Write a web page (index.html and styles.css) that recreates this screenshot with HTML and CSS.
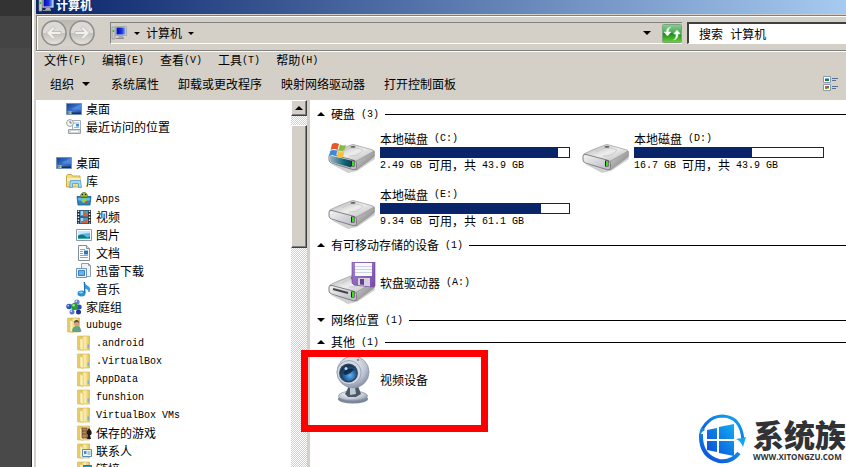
FILE: index.html
```html
<!DOCTYPE html>
<html lang="zh-CN">
<head>
<meta charset="utf-8">
<title>计算机</title>
<link rel="stylesheet" href="styles.css">
</head>
<body>
<svg class="defs" aria-hidden="true">
  <defs>
    <linearGradient id="gScreen" x1="0" y1="0" x2="1" y2="1"><stop offset="0" stop-color="#173a94"/><stop offset=".55" stop-color="#3d78cf"/><stop offset="1" stop-color="#1c4ba8"/></linearGradient>
    <linearGradient id="gBlue" x1="0" y1="0" x2="1" y2="0"><stop offset="0" stop-color="#0407b8"/><stop offset=".6" stop-color="#1c35e0"/><stop offset="1" stop-color="#7db1f5"/></linearGradient>
    <linearGradient id="gFolder" x1="0" y1="0" x2="1" y2="0"><stop offset="0" stop-color="#e8c75a"/><stop offset=".45" stop-color="#fbeeae"/><stop offset="1" stop-color="#e3c050"/></linearGradient>
    <linearGradient id="gTop" x1="0" y1="0" x2="1" y2="1"><stop offset="0" stop-color="#a9a9a9"/><stop offset=".5" stop-color="#ededed"/><stop offset="1" stop-color="#b0b0b0"/></linearGradient>
    <linearGradient id="gFront" x1="0" y1="0" x2="1" y2="1"><stop offset="0" stop-color="#f4f4f6"/><stop offset="1" stop-color="#b6b6c2"/></linearGradient>
    <linearGradient id="gSide" x1="0" y1="0" x2="1" y2="1"><stop offset="0" stop-color="#d5d5d5"/><stop offset="1" stop-color="#777"/></linearGradient>
    <linearGradient id="gTeal" x1="0" y1="0" x2="1" y2="0"><stop offset="0" stop-color="#9bb3c0"/><stop offset=".7" stop-color="#0d6378"/><stop offset="1" stop-color="#164653"/></linearGradient>
    <linearGradient id="gGreen" x1="0" y1="0" x2="0" y2="1"><stop offset="0" stop-color="#8ccf94"/><stop offset=".48" stop-color="#45a552"/><stop offset=".5" stop-color="#168a1e"/><stop offset="1" stop-color="#6bd332"/></linearGradient>
    <linearGradient id="gNav" x1="0" y1="0" x2="0" y2="1"><stop offset="0" stop-color="#d9d8d5"/><stop offset=".48" stop-color="#dddcd9"/><stop offset=".52" stop-color="#c5c2bc"/><stop offset="1" stop-color="#e6e4df"/></linearGradient>
    <linearGradient id="gFloppy" x1="0" y1="0" x2="1" y2="1"><stop offset="0" stop-color="#a183cd"/><stop offset="1" stop-color="#7a4ba9"/></linearGradient>
    <linearGradient id="gLogo" x1="0" y1="1" x2="1" y2="0"><stop offset="0" stop-color="#0b47d8"/><stop offset="1" stop-color="#12aef2"/></linearGradient>
    <radialGradient id="gCam" cx=".4" cy=".3" r=".75"><stop offset="0" stop-color="#f6f8fb"/><stop offset=".65" stop-color="#bfc6d3"/><stop offset="1" stop-color="#7f8ba1"/></radialGradient>
    <radialGradient id="gLens" cx=".6" cy=".65" r=".6"><stop offset="0" stop-color="#62b5f0"/><stop offset=".6" stop-color="#2164a8"/><stop offset="1" stop-color="#16324f"/></radialGradient>

    <symbol id="i-computer" viewBox="0 0 16 16">
      <path d="M1 2h3v12H1z" fill="#c9c9c5" stroke="#8b8b86" stroke-width=".6"/><path d="M1.700 5h1.500v2H1.700z" fill="#19c918"/>
      <path d="M4.500 1.500h11v9h-11z" fill="#dcdcd8" stroke="#9a9a95" stroke-width=".7"/><path d="M5.500 2.500h9v7h-9z" fill="url(#gBlue)"/>
      <path d="M8 11h4l1 2H7z" fill="#aaa"/><path d="M5 13.500h8" stroke="#8c8c88"/>
    </symbol>
    <symbol id="i-desktop" viewBox="0 0 16 16">
      <path d="M.5 2.500h15v11H.5z" fill="url(#gScreen)" stroke="#7593b9"/><path d="M1 11.500h14v1.500H1z" fill="#17324e"/>
      <path d="M5 8l10-5v6z" fill="#6ba2e8" opacity=".45"/>
      <path d="M1.500 10h2v1.500h-2z" fill="#f07b30"/><path d="M3.500 10h2v1.500h-2z" fill="#8dd04b"/><path d="M1.500 11.500h2V13h-2z" fill="#58b2f2"/><path d="M3.500 11.500h2V13h-2z" fill="#f7d745"/>
    </symbol>
    <symbol id="i-recent" viewBox="0 0 16 16">
      <path d="M6.500 1.500h8v10h-8z" fill="#f7fafc" stroke="#a5aeb6"/><path d="M8 4h5M8 8.500h5" stroke="#9cb8d0"/><path d="M10 5h3v2.500h-3z" fill="#3e8fd4"/>
      <path d="M2.500 10.500h12v4h-12z" fill="#d4d8da" stroke="#999fa4"/><path d="M5 12.500h7" stroke="#fff"/>
      <circle cx="4" cy="4" r="3.400" fill="#f5f5f2" stroke="#9da1a4"/><path d="M4 2v2h1.800" fill="none" stroke="#555" stroke-width=".8"/>
    </symbol>
    <symbol id="i-library" viewBox="0 0 16 16">
      <path d="M.5 2.500l1-1h4l1 1.500h7.500v11H.5z" fill="#f2d97c" stroke="#cba945"/><path d="M1 5h13v3H1z" fill="#fbefb8"/>
      <path d="M4.500 7.500h10l1 7h-3v-4h-6v4h-3z" fill="#9fd9f5" stroke="#519dcd" stroke-width=".8"/>
    </symbol>
    <symbol id="i-apps" viewBox="0 0 16 16">
      <path d="M4.500 6q0-4.500 3.500-4.500T11.500 6z" fill="#9fc02d" stroke="#4f6d15" stroke-width=".7"/><circle cx="6.500" cy="3.500" r=".7" fill="#222"/><circle cx="9.500" cy="3.500" r=".7" fill="#222"/>
      <path d="M1 5.500h3l1 1h6l1-1h3l-1 8.500H2z" fill="#2b86c8" stroke="#125a96" stroke-width=".8"/><path d="M2 7h12l-.3 2.500H2.300z" fill="#65b9e8"/><path d="M5 10l4-3 2 3-3 2z" fill="#9fd43b"/><path d="M8 11l3-1v2z" fill="#e1422a"/>
    </symbol>
    <symbol id="i-video" viewBox="0 0 16 16">
      <path d="M1 1h14v14H1z" fill="#222c36"/><path d="M4 1.500h8v6H4zM4 8.500h8v6H4z" fill="#3fa0dc"/><path d="M7 2l5 3v2.500H8zM4 11l4 1 3-2v4H6z" fill="#d0623c"/><path d="M5 2h2v4H5zM5 9h2v3H5z" fill="#9fd8f3"/>
      <path d="M2.500 1.500v13M13.500 1.500v13" stroke="#e8eef2" stroke-width="1.500" stroke-dasharray="1.500 1.500"/>
    </symbol>
    <symbol id="i-picture" viewBox="0 0 16 16">
      <path d="M.5 2.500h15v11H.5z" fill="#fff" stroke="#8f989f"/><path d="M2 4h12v8H2z" fill="#56b6e8"/><path d="M2 4h12v2q-6 0-12 2z" fill="#c4e9f8"/><path d="M2 9q4-3 7 0t5 0v3H2z" fill="#1d6f76"/><path d="M2 11h12v1H2z" fill="#3cb0b7"/>
    </symbol>
    <symbol id="i-doc" viewBox="0 0 16 16">
      <path d="M2.500 .5h8l3 3v12h-11z" fill="#fbfcfd" stroke="#858c93"/><path d="M10.500 .5v3h3" fill="#dde3e8" stroke="#858c93"/><path d="M4 4.500h5M4 6.500h3M4 8.500h3M4 10.500h8M4 12.500h8" stroke="#8ba6c8"/><path d="M8 5.500h4v4H8z" fill="#2878bd"/>
    </symbol>
    <symbol id="i-download" viewBox="0 0 16 16">
      <path d="M5.500 .5h7l2 2v11h-9z" fill="#eef3f8" stroke="#8ba0b5"/><path d="M12.500 .5v2h2" fill="none" stroke="#8ba0b5"/><path d="M.5 5.500h10v9H.5z" fill="#e9f3fc" stroke="#7593b0"/><path d="M2.500 7.500h6v5h-6z" fill="#6bb0ef" stroke="#357fc8"/>
    </symbol>
    <symbol id="i-music" viewBox="0 0 16 16">
      <path d="M8 1q1 3 4 4.500t1 5.500q0-3-4-4v5z" fill="#2d9de2" stroke="#1b74b8" stroke-width=".6"/><ellipse cx="5.500" cy="12.500" rx="4" ry="3" fill="#2590db"/><ellipse cx="5" cy="11.500" rx="2" ry="1" fill="#8bd1f5"/><path d="M8.500 1v11" stroke="#1b74b8"/>
    </symbol>
    <symbol id="i-homegroup" viewBox="0 0 16 16">
      <path d="M3 7l5 1 3-5M8 8l5 4M8 8l-2 5" stroke="#8392ba" stroke-width="2"/>
      <circle cx="3" cy="7.500" r="2.700" fill="#2f54b8"/><circle cx="11" cy="3" r="2.600" fill="#6482c8"/><circle cx="13.200" cy="8" r="2.500" fill="#304fa8"/><circle cx="6" cy="13" r="2.500" fill="#5478ce"/><circle cx="12.500" cy="13" r="2.500" fill="#20358e"/><circle cx="8.500" cy="7.500" r="3.500" fill="#279d34"/>
      <circle cx="7.600" cy="6.300" r="1.300" fill="#a0e58f"/><circle cx="2.300" cy="6.700" r=".9" fill="#b7caf1"/><circle cx="10.300" cy="2.200" r=".9" fill="#dce6fa"/><circle cx="5.300" cy="12.200" r=".9" fill="#d0dffa"/>
    </symbol>
    <symbol id="i-folder" viewBox="0 0 16 16">
      <path d="M1.500 1h5v14h-5z" fill="#e9cb67" stroke="#d7b74f" stroke-width=".6"/><path d="M5 2.500l2-1.500h6.500v14H5z" fill="url(#gFolder)" stroke="#d0ad45" stroke-width=".6"/><path d="M4 3l3 1.500v11L4 14z" fill="#fdf3bd" stroke="#d9bd5d" stroke-width=".5"/><path d="M11.500 9.500H13V13h-1.500z" fill="#6db6e3"/>
    </symbol>
    <symbol id="i-user" viewBox="0 0 16 16">
      <use href="#i-folder"/><circle cx="10.500" cy="6.500" r="2.600" fill="#d8a075"/><path d="M8 6q0-3 2.500-3T13 6q-2-2-5 0z" fill="#51483f"/><path d="M6.500 14.500q0-5 4-5t4.500 5z" fill="#5fa486" stroke="#41816a" stroke-width=".5"/>
    </symbol>
    <symbol id="i-games" viewBox="0 0 16 16">
      <use href="#i-folder"/><path d="M6 3h5v10H6z" fill="#b98553" stroke="#593b28" stroke-width=".7"/><path d="M6.500 6h4M6.500 9h4" stroke="#2c2119" stroke-dasharray="1 1"/><path d="M13 3q4 4 2 7h-1l1 4h-4l1-4q-3-2 1-7z" fill="#1c1c1c"/>
    </symbol>
    <symbol id="i-contacts" viewBox="0 0 16 16">
      <use href="#i-folder"/><path d="M6.500 6.500h9v7h-9z" fill="#eaf5fc" stroke="#5b8cae"/><path d="M8 8h2.500v3H8z" fill="#4291c6"/><path d="M11.500 9h3M11.500 11h3" stroke="#7799b0"/>
    </symbol>
    <symbol id="i-links" viewBox="0 0 16 16">
      <use href="#i-folder"/><path d="M7.500 4.500h8v9h-8z" fill="#2a95dc" stroke="#1b73b4"/><path d="M9 11l4-4M10 7h3v3" fill="none" stroke="#fff" stroke-width="1.300"/>
    </symbol>

    <symbol id="i-drive" viewBox="0 0 48 32">
      <path d="M3 22l17 9 9-2 18-12-2-5-20 13z" fill="#777" opacity=".35"/>
      <path d="M1.500 12.500Q2 11 23 3q2-1 4 0l18 5q2 1 1 3L29 19q-2 1-4 1L3 14z" fill="url(#gTop)" stroke="#9a9a9a" stroke-width=".7"/>
      <path d="M28 19.500L46 9q1 1 .5 5.500L29 27.500q-1.500 1-1.500-2z" fill="url(#gSide)" stroke="#888" stroke-width=".5"/>
      <path d="M1 14q0-2 3-1.500l21 5.500q3.500 1 3.500 3.500v4q0 3-3 2.300L3.500 21Q1 20 1 18z" fill="url(#gFront)" stroke="#777" stroke-width=".9"/>
      <ellipse cx="25" cy="5" rx="2.500" ry="1.100" fill="#55585c"/><path d="M14 10q10-7 21-2-5 7-14 6" fill="none" stroke="#c2c2c2" stroke-width=".7"/>
      <path d="M23 18.500h3.500v6H23z" fill="#222"/><path d="M24 19h2v5h-2z" fill="#36e318"/>
    </symbol>
    <symbol id="i-windrive" viewBox="0 0 48 32">
      <use href="#i-drive"/><path d="M2 13.500l21 5v7L3 20q-1-1-1-3z" fill="url(#gTeal)"/>
      <path d="M4 2q3-2 7 0L9.500 8Q6 6 2.500 8z" fill="#e4592a"/><path d="M12 2.500q4 2 6 0L16.500 8q-3 2-6 0z" fill="#86bd3c"/><path d="M2.200 9q3-2 7 0L8 14q-3-2-7 0z" fill="#4188d2"/><path d="M10.200 9.500q3 2 6 0L15 15q-3 1.500-6 0z" fill="#f9c22e"/>
    </symbol>
    <symbol id="i-floppy" viewBox="0 0 48 42">
      <use href="#i-drive" x="0" y="11" width="48" height="32"/>
      <path d="M5 27l15 4" stroke="#444" stroke-width="2"/><path d="M24 0h23v24l-3 1-18-2-2-2z" fill="url(#gFloppy)" stroke="#6d3d98" stroke-width=".6"/>
      <path d="M27 1h17v13H27z" fill="#f8f9fc"/><path d="M27 4.500h17M27 7.500h17M27 10.500h17" stroke="#bfc8db" stroke-width=".8"/><path d="M30 16h12v8.500l-12-1.500z" fill="#d4d2de"/><path d="M32 17h4v6l-4-.5z" fill="#674095"/>
    </symbol>
    <symbol id="i-webcam" viewBox="0 0 36 50">
      <ellipse cx="18" cy="44" rx="15" ry="4.500" fill="#7b8696"/><ellipse cx="18" cy="41" rx="14.500" ry="5" fill="url(#gCam)" stroke="#8792a5" stroke-width=".7"/>
      <path d="M14 31h9l3 8-5 3h-8l-3-3z" fill="#4d5866"/><path d="M15 32h5l1 7-6 1z" fill="#bfc8d5"/>
      <circle cx="18" cy="17" r="16" fill="url(#gCam)" stroke="#8b97aa" stroke-width=".8"/><ellipse cx="14" cy="17.500" rx="12" ry="12" fill="#d4dae4" stroke="#8d99ab" stroke-width=".8"/>
      <circle cx="13.500" cy="18" r="9.500" fill="#33465d"/><circle cx="13.500" cy="18" r="8" fill="url(#gLens)"/><path d="M8 18q4-6 11-4-3 5-9 6z" fill="#101b2d" opacity=".8"/><circle cx="11" cy="13.500" r="1.500" fill="#bfdaf0"/><circle cx="23" cy="5" r="1" fill="#778"/>
    </symbol>
  </defs>
</svg>

<div class="backdrop" aria-hidden="true"></div>
<main class="window">
  <header class="titlebar"><svg class="icon"><use href="#i-computer"/></svg><h1>计算机</h1></header>

  <div class="navbar">
    <div class="travel">
      <button aria-label="后退"><svg viewBox="0 0 26 26"><circle cx="13" cy="13" r="12" fill="url(#gNav)" stroke="#8c8e8e" stroke-width="1.500"/><path d="M5.500 13l6.500-6.500 2 2-3 3h9v3h-9l3 3-2 2z" fill="#f1f0ed" stroke="#b7b5b0" stroke-width=".8"/></svg></button>
      <button aria-label="前进"><svg viewBox="0 0 26 26"><circle cx="13" cy="13" r="12" fill="url(#gNav)" stroke="#8c8e8e" stroke-width="1.500"/><path d="M20.500 13L14 6.500l-2 2 3 3H6v3h9l-3 3 2 2z" fill="#f1f0ed" stroke="#b7b5b0" stroke-width=".8"/></svg></button>
    </div>
    <div class="address">
      <svg class="icon"><use href="#i-computer"/></svg>
      <button class="crumb-arrow" aria-label="位置"><i class="down small"></i></button>
      <button class="crumb">计算机<i class="down small"></i></button>
      <button class="history" aria-label="历史记录"><i class="down"></i></button>
      <button class="refresh" aria-label="刷新"><svg viewBox="0 0 20 19"><rect x=".5" y=".5" width="19" height="18" rx="1" fill="url(#gGreen)" stroke="#7aa67d"/><path d="M9 3Q6 4 6.500 8H9l-3.500 4L2 8h2.500Q4 4 9 3zM11.500 16q3-1 2.500-6h-2.500L15 6l3.500 4H16q.5 5-4.500 6z" fill="#fff" stroke="#e2f3e2" stroke-width=".5"/></svg></button>
    </div>
    <input class="search" type="text" aria-label="搜索" value="搜索 计算机">
  </div>

  <nav class="menubar">
    <button>文件<span class="en">(F)</span></button><button>编辑<span class="en">(E)</span></button><button>查看<span class="en">(V)</span></button><button>工具<span class="en">(T)</span></button><button>帮助<span class="en">(H)</span></button>
  </nav>
  <div class="toolbar">
    <button class="organize">组织<i class="down"></i></button><button>系统属性</button><button>卸载或更改程序</button><button>映射网络驱动器</button><button>打开控制面板</button>
    <button class="view" aria-label="更改视图"><svg viewBox="0 0 16 16"><path d="M.5 .5h7v6h-7zM.5 8.500h7v6h-7z" fill="#fff" stroke="#8b9ba8"/><path d="M2 2h4v1H2z" fill="#79bbe8"/><path d="M2 3h4v2H2z" fill="#27734b"/><path d="M2 10h2v2H2z" fill="#df5039"/><path d="M4 10h2v2H4z" fill="#416fcb"/><path d="M2 12h2v1H2z" fill="#43a53c"/><path d="M4 12h2v1H4z" fill="#edba31"/><path d="M9 2.500h6M9 4.500h4M9 10.500h6M9 12.500h4" stroke="#577291"/></svg></button>
  </div>

  <div class="content">
    <nav class="tree">
      <ul>
        <li class="l2"><a href="#"><svg class="icon"><use href="#i-desktop"/></svg>桌面</a></li>
        <li class="l2"><a href="#"><svg class="icon"><use href="#i-recent"/></svg>最近访问的位置</a></li>
      </ul>
      <ul>
        <li class="l1"><a href="#"><svg class="icon"><use href="#i-desktop"/></svg>桌面</a></li>
        <li class="l2"><a href="#"><svg class="icon"><use href="#i-library"/></svg>库</a></li>
        <li class="l3"><a href="#"><svg class="icon"><use href="#i-apps"/></svg><span class="en">Apps</span></a></li>
        <li class="l3"><a href="#"><svg class="icon"><use href="#i-video"/></svg>视频</a></li>
        <li class="l3"><a href="#"><svg class="icon"><use href="#i-picture"/></svg>图片</a></li>
        <li class="l3"><a href="#"><svg class="icon"><use href="#i-doc"/></svg>文档</a></li>
        <li class="l3"><a href="#"><svg class="icon"><use href="#i-download"/></svg>迅雷下载</a></li>
        <li class="l3"><a href="#"><svg class="icon"><use href="#i-music"/></svg>音乐</a></li>
        <li class="l2"><a href="#"><svg class="icon"><use href="#i-homegroup"/></svg>家庭组</a></li>
        <li class="l2"><a href="#"><svg class="icon"><use href="#i-user"/></svg><span class="en">uubuge</span></a></li>
        <li class="l3"><a href="#"><svg class="icon"><use href="#i-folder"/></svg><span class="en">.android</span></a></li>
        <li class="l3"><a href="#"><svg class="icon"><use href="#i-folder"/></svg><span class="en">.VirtualBox</span></a></li>
        <li class="l3"><a href="#"><svg class="icon"><use href="#i-folder"/></svg><span class="en">AppData</span></a></li>
        <li class="l3"><a href="#"><svg class="icon"><use href="#i-folder"/></svg><span class="en">funshion</span></a></li>
        <li class="l3"><a href="#"><svg class="icon"><use href="#i-folder"/></svg><span class="en">VirtualBox VMs</span></a></li>
        <li class="l3"><a href="#"><svg class="icon"><use href="#i-games"/></svg>保存的游戏</a></li>
        <li class="l3"><a href="#"><svg class="icon"><use href="#i-contacts"/></svg>联系人</a></li>
        <li class="l3"><a href="#"><svg class="icon"><use href="#i-links"/></svg>链接</a></li>
      </ul>
    </nav>
    <div class="scrollbar"><button aria-label="向上滚动"><i class="up"></i></button><div class="thumb"></div></div>

    <section class="pane">
      <h2><i class="up"></i>硬盘<span class="en"> (3)</span></h2>
      <div class="drives">
        <article class="item"><svg class="drive"><use href="#i-windrive"/></svg><div class="info"><p>本地磁盘<span class="en"> (C:)</span></p><div class="bar"><div style="width:94%"></div></div><p><span class="en">2.49 GB </span>可用，共<span class="en"> 43.9 GB</span></p></div></article>
        <article class="item"><svg class="drive"><use href="#i-drive"/></svg><div class="info"><p>本地磁盘<span class="en"> (D:)</span></p><div class="bar"><div style="width:62%"></div></div><p><span class="en">16.7 GB </span>可用，共<span class="en"> 43.9 GB</span></p></div></article>
        <article class="item"><svg class="drive"><use href="#i-drive"/></svg><div class="info"><p>本地磁盘<span class="en"> (E:)</span></p><div class="bar"><div style="width:85%"></div></div><p><span class="en">9.34 GB </span>可用，共<span class="en"> 61.1 GB</span></p></div></article>
      </div>
      <h2><i class="up"></i>有可移动存储的设备<span class="en"> (1)</span></h2>
      <article class="item removable"><svg class="floppy"><use href="#i-floppy"/></svg><p>软盘驱动器<span class="en"> (A:)</span></p></article>
      <h2><i class="down"></i>网络位置<span class="en"> (1)</span></h2>
      <h2><i class="up"></i>其他<span class="en"> (1)</span></h2>
      <article class="item camera"><svg class="webcam"><use href="#i-webcam"/></svg><p>视频设备</p><div class="highlight"></div></article>
    </section>
  </div>
</main>

<div class="watermark">
  <svg viewBox="0 0 50 52"><g fill="none" stroke="url(#gLogo)" stroke-width="3"><path d="M4 17Q11 3 25 3q18 1 20 24"/><path d="M3 21q-1 22 18 27 12 2 20-8" stroke-width="4"/></g><path d="M38 26q4 1 7 8l3-10-4 1z" fill="#13a6ef"/><path d="M1 25q0-8 3-11l3 3-3 2z" fill="#1684e5"/><path d="M9 17l10-2v11H9zM21 14l15-3v15H21zM9 28h10v11L9 37zM21 28h15v15l-15-3z" fill="url(#gLogo)"/></svg>
  <div><strong>系统族</strong><span>WWW.XITONGZU.COM</span></div>
</div>
</body>
</html>
```
FILE: styles.css
```css
* { box-sizing: border-box; }

body {
  display: flex;
  height: 100vh;
  margin: 0;
  overflow: hidden;
  background: #474747;
  color: #000;
  font: 12px/18px "Noto Sans CJK SC", sans-serif;
}

button {
  display: flex;
  align-items: center;
  padding: 0;
  border: 0;
  background: none;
  color: inherit;
  font: inherit;
  white-space: nowrap;
}

ul, p, h1, h2 { margin: 0; padding: 0; list-style: none; font-size: 12px; font-weight: 400; }
a { color: inherit; text-decoration: none; }
svg { display: block; flex: none; }
.defs { position: absolute; width: 0; height: 0; }
.icon { width: 16px; height: 16px; }
.en { padding-top: 1px; font-family: "Liberation Mono", monospace; font-size: 10px; line-height: 14px; white-space: pre; }

.down, .up {
  flex: none;
  border: 4px solid transparent;
  border-bottom-width: 0;
  border-top-color: #000;
}
.up { border-width: 0 4px 4px; border-bottom-color: #000; }
.small { border-width: 3px 3px 0; }

.backdrop {
  width: 32px;
  background: linear-gradient(#333 16px, #444 16px, #444 48px, #494949 48px);
  border-right: 1px solid #222;
}

.window {
  display: flex;
  flex: 1;
  flex-direction: column;
  min-width: 0;
  padding-left: 2px;
  border-left: 2px solid #fff;
  background: #d4d0c8;
}

.titlebar {
  display: flex;
  gap: 2px;
  height: 14px;
  padding-left: 2px;
  overflow: hidden;
  background: linear-gradient(90deg, #0a246a, #a6caf0);
  color: #fff;
}
.titlebar .icon { margin-top: -3px; }
.titlebar h1 { font-weight: 700; line-height: 10px; }

.navbar {
  display: flex;
  align-items: center;
  height: 36px;
  margin-top: 1px;
  padding-left: 4px;
  border: solid #808080;
  border-width: 1px 0 1px 1px;
  box-shadow: inset 1px 1px #fff, 0 1px #fff;
}
.travel {
  display: flex;
  gap: 2px;
  border-radius: 14px;
  background: linear-gradient(#bbb8b2, #d8d5ce);
}
.travel svg { width: 26px; height: 26px; }

.address {
  display: flex;
  flex: 1;
  align-items: center;
  height: 22px;
  margin: 0 5px 0 15px;
  border-top: 1px solid #808080;
  border-left: 1px solid #808080;
  border-bottom: 1px solid #fff;
}
.crumb-arrow { margin: 0 6px 0 7px; }
.crumb { gap: 6px; }
.history { margin: 0 11px 0 auto; }
.refresh svg { width: 20px; height: 19px; }

.search {
  width: 159px;
  height: 22px;
  padding: 0 10px;
  border: 1px solid #404040;
  border-width: 2px 0 1px 2px;
  border-bottom-color: #fff;
  background: #fff;
  color: #000;
  font: 12px "Liberation Mono", "Noto Sans CJK SC", monospace;
}

.menubar { display: flex; gap: 16px; height: 18px; padding-left: 8px; }
.toolbar { display: flex; gap: 19px; height: 31px; padding: 0 7px 2px 14px; }
.organize { gap: 8px; margin-right: 2px; }
.view { margin-left: auto; }
.view svg { width: 16px; height: 16px; }

.content { display: flex; flex: 1; min-height: 0; }
.tree { width: 255px; overflow: hidden; background: #fff; }
.tree ul + ul { margin-top: 18px; }
.tree a { display: flex; align-items: center; gap: 4px; height: 18px; }
.l1 { padding-left: 20px; }
.l2 { padding-left: 30px; }
.l3 { padding-left: 40px; }

.scrollbar {
  width: 16px;
  background: repeating-conic-gradient(#fff 0 25%, #d4d0c8 0 50%) 0 0 / 2px 2px;
}
.scrollbar button, .thumb {
  width: 16px;
  height: 16px;
  border: 1px solid;
  border-color: #fff #404040 #404040 #fff;
  background: #d4d0c8;
  box-shadow: inset -1px -1px #808080;
}
.scrollbar button { justify-content: center; }
.thumb { height: 123px; margin-top: 9px; }

.pane { flex: 1; min-width: 0; margin-left: 3px; padding-top: 3px; background: #fff; }
.pane h2 { display: flex; align-items: center; height: 22px; padding-left: 7px; }
.pane h2 i { margin-right: 6px; }
.pane h2::after { content: ""; flex: 1; height: 1px; margin-left: 6px; background: #000; }

.drives { display: grid; grid-template-columns: 254px 254px; grid-auto-rows: 56px; height: 109px; padding: 5px 0 0 18px; }
.item { display: flex; gap: 4px; }
.item p { display: flex; align-items: center; }
.info { width: 190px; }
.info p { height: 17px; }
.info p:last-child { height: 14px; }
.drive { width: 48px; height: 32px; margin-top: 12px; }
.bar { height: 11px; border: 1px solid #0a246a; background: #fff; }
.bar div { height: 100%; background: #0a246a; }

.removable { align-items: center; height: 53px; padding-left: 18px; }
.floppy { width: 48px; height: 42px; }
.camera { position: relative; align-items: center; gap: 9px; height: 54px; padding-left: 25px; }
.webcam { width: 36px; height: 50px; }
.highlight { position: absolute; top: -3px; left: -9px; width: 187px; height: 82px; border: 7px solid #f00; }

.watermark {
  position: absolute;
  right: 0;
  bottom: 2px;
  display: flex;
  align-items: center;
  gap: 5px;
  color: #303236;
}
.watermark svg { width: 50px; height: 52px; }
.watermark div { display: flex; flex-direction: column; }
.watermark strong { font-size: 31px; font-weight: 900; line-height: 36px; }
.watermark span { font: 700 8px/10px "Open Sans", sans-serif; }
```
